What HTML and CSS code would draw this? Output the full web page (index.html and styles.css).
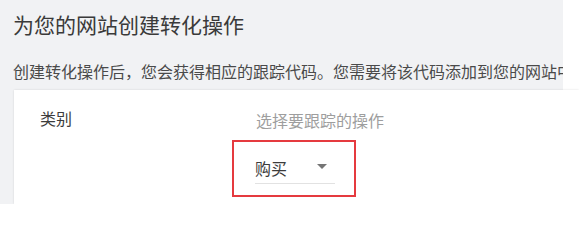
FILE: index.html
```html
<!DOCTYPE html>
<html lang="zh-CN">
<head>
<meta charset="utf-8">
<link rel="stylesheet" href="styles.css">
</head>
<body>
<div class="page">
  <div class="header">
    <h1 class="title">为您的网站创建转化操作</h1>
    <p class="subtitle">创建转化操作后，您会获得相应的跟踪代码。您需要将该代码添加到您的网站中</p>
  </div>
  <div class="card">
    <div class="row">
      <div class="label">类别</div>
      <div class="value">
        <div class="hint">选择要跟踪的操作</div>
        <div class="highlight">
          <div class="select">
            <span class="select-text">购买</span>
            <span class="arrow"></span>
          </div>
        </div>
      </div>
    </div>
  </div>
</div>
</body>
</html>
```

FILE: styles.css
```css
html, body {
  margin: 0;
  padding: 0;
  background: #ffffff;
}
body {
  font-family: "Noto Sans CJK SC", "Noto Sans", sans-serif;
  width: 579px;
  height: 204px;
  overflow: hidden;
}
.page {
  width: 563px;
  height: 204px;
  background: #f1f2f4;
  display: flex;
  flex-direction: column;
}
.header {
  padding: 10px 0 0 13px;
  overflow: hidden;
  white-space: nowrap;
}
.title {
  margin: 0;
  font-size: 21px;
  line-height: 28px;
  font-weight: 400;
  color: #3a3a3a;
}
.subtitle {
  margin: 22px 0 0;
  font-size: 16px;
  line-height: 22px;
  color: #4a4a4a;
}
.card {
  margin: 8px 0 0 14px;
  width: 565px;
  flex: 1;
  background: #ffffff;
  box-shadow: 0 0 2px rgba(0, 0, 0, 0.12);
  padding: 18px 0 0 26px;
  box-sizing: border-box;
}
.row {
  display: grid;
  grid-template-columns: 216px 1fr;
}
.label {
  font-size: 16px;
  line-height: 22px;
  color: #3c3c3c;
  margin-top: -1px;
}
.value {
  display: flex;
  flex-direction: column;
  align-items: flex-start;
}
.hint {
  font-size: 16px;
  line-height: 22px;
  color: #9e9e9e;
  margin-top: 1px;
}
.highlight {
  margin: 9px 0 0 -24px;
  border: 2px solid #e53a3f;
  padding: 15px 19px 11px 21px;
}
.select {
  width: 80px;
  display: flex;
  align-items: center;
  justify-content: space-between;
  border-bottom: 1px solid #e2e2e2;
  padding-bottom: 4px;
}
.select-text {
  font-size: 16px;
  line-height: 22px;
  color: #3c3c3c;
}
.arrow {
  width: 0;
  height: 0;
  border-left: 5px solid transparent;
  border-right: 5px solid transparent;
  border-top: 5px solid #757575;
  margin-right: 8px;
  margin-bottom: 3px;
}
```
